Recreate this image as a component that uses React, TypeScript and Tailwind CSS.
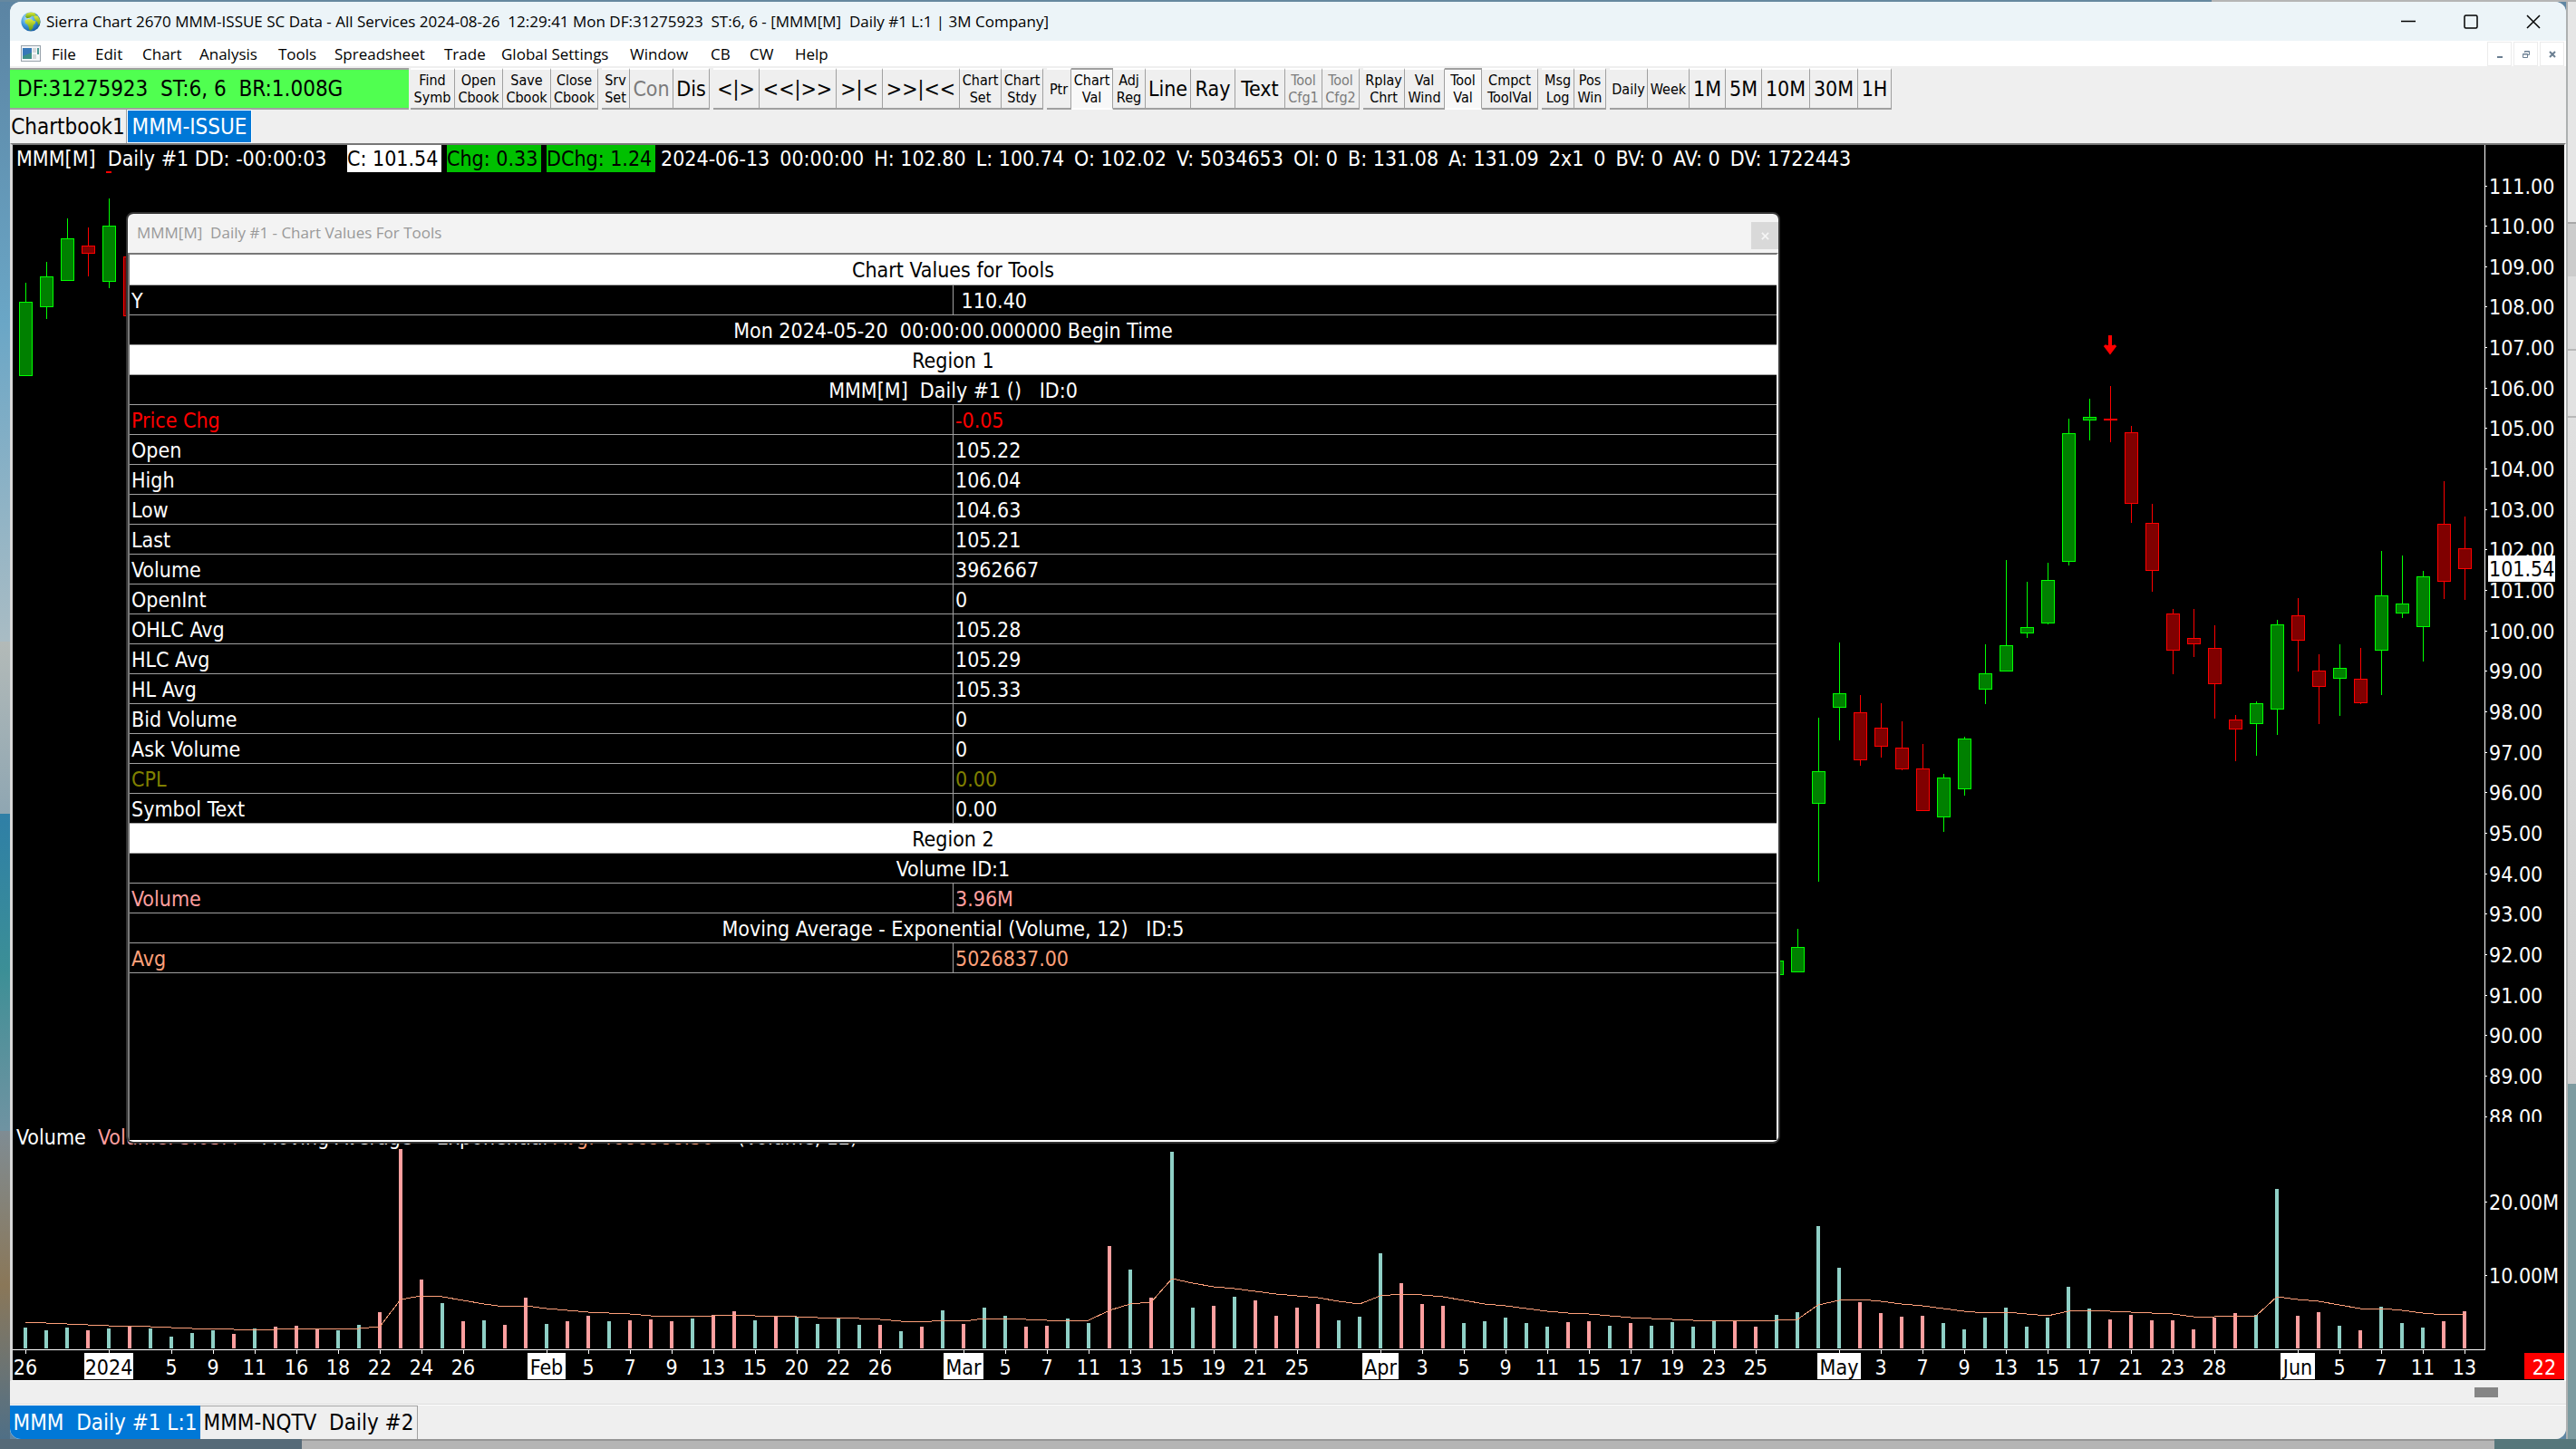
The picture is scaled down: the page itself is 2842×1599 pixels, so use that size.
import { useState } from "react";

type Candle = [number, "u" | "d", number, number, number, number];

// slot, direction, high, body top, body bottom, low
const CANDLES: Candle[] = [
  [0, "u", 152, 173, 255, 255],
  [1, "u", 129, 145, 179, 192],
  [2, "u", 81, 103, 150, 150],
  [3, "d", 91, 111, 120, 145],
  [4, "u", 59, 89, 151, 158],
  [5, "d", 123, 123, 189, 189],
  [84, "u", 900, 900, 916, 916],
  [85, "u", 865, 885, 913, 913],
  [86, "u", 632, 691, 727, 813],
  [87, "u", 549, 605, 621, 657],
  [88, "d", 607, 626, 679, 685],
  [89, "d", 616, 643, 664, 676],
  [90, "d", 636, 665, 689, 690],
  [91, "d", 661, 688, 735, 735],
  [92, "u", 694, 698, 742, 758],
  [93, "u", 653, 655, 711, 718],
  [94, "u", 551, 583, 601, 617],
  [95, "u", 458, 552, 581, 581],
  [96, "u", 482, 532, 539, 544],
  [97, "u", 461, 480, 528, 529],
  [98, "u", 302, 318, 460, 464],
  [99, "u", 280, 300, 304, 326],
  [100, "d", 266, 302, 304, 328],
  [101, "d", 310, 317, 396, 417],
  [102, "d", 396, 417, 470, 493],
  [103, "d", 512, 517, 558, 584],
  [104, "d", 512, 544, 551, 565],
  [105, "d", 530, 555, 595, 633],
  [106, "d", 629, 634, 645, 680],
  [107, "u", 614, 616, 639, 674],
  [108, "u", 524, 529, 623, 651],
  [109, "d", 500, 519, 547, 581],
  [110, "d", 562, 580, 598, 639],
  [111, "u", 551, 577, 589, 630],
  [112, "d", 555, 589, 616, 617],
  [113, "u", 448, 497, 558, 607],
  [114, "u", 453, 506, 517, 522],
  [115, "u", 470, 476, 532, 570],
  [116, "d", 371, 418, 482, 501],
  [117, "d", 410, 445, 468, 502],
];

// u = up day, d = down day, then the bar height in thirds of a pixel
const VOLUME =
  "u69 u60 u69 d60 u66 d72 u66 u39 u51 u60 d48 u66 d72 d75 d66 u60 u78 d120 d660 d228 u150 d90 u93 d78 d168 u81 d90 d108 u90 d93 d96 d90 u99 d111 d123 u93 d108 u105 u81 u99 u78 d78 u57 d72 u126 d81 u135 u108 d72 d75 u99 u84 d339 u261 d168 u651 u135 d141 u171 d159 d108 d135 d147 u93 u105 u315 d216 d147 d141 u84 u90 u102 u84 u72 d87 d90 u75 d84 u75 u87 u72 u90 d90 d72 u111 u120 u405 u267 d153 d117 d105 d108 u84 u63 u102 u135 u72 u102 u204 u132 d96 d111 d93 d93 d63 d102 d117 u111 u528 d108 d120 u75 d60 u138 u84 u69 d90 d123".split(
    " "
  );

const AVERAGE = [
  86, 83, 80, 77, 74, 74, 73, 68, 65, 65, 62, 62, 62, 65, 65, 65, 65, 72, 162,
  173, 170, 159, 147, 137, 140, 131, 125, 121, 116, 113, 109, 107, 107, 107,
  110, 107, 107, 106, 101, 101, 98, 95, 89, 86, 92, 89, 98, 98, 95, 92, 92, 92,
  126, 148, 153, 230, 215, 203, 197, 190, 179, 173, 167, 155, 148, 173, 179,
  176, 170, 159, 147, 140, 131, 122, 116, 113, 107, 101, 98, 95, 92, 92, 92, 89,
  92, 95, 143, 160, 161, 155, 146, 140, 131, 122, 116, 119, 113, 109, 124, 125,
  122, 119, 116, 113, 104, 104, 107, 107, 170, 161, 155, 144, 131, 131, 125,
  116, 110, 113,
];

const DATES: [number, string][] = [
  [0, "26"], [7, "5"], [9, "9"], [11, "11"], [13, "16"], [15, "18"],
  [17, "22"], [19, "24"], [21, "26"], [27, "5"], [29, "7"], [31, "9"],
  [33, "13"], [35, "15"], [37, "20"], [39, "22"], [41, "26"], [47, "5"],
  [49, "7"], [51, "11"], [53, "13"], [55, "15"], [57, "19"], [59, "21"],
  [61, "25"], [67, "3"], [69, "5"], [71, "9"], [73, "11"], [75, "15"],
  [77, "17"], [79, "19"], [81, "23"], [83, "25"], [89, "3"], [91, "7"],
  [93, "9"], [95, "13"], [97, "15"], [99, "17"], [101, "21"], [103, "23"],
  [105, "28"], [111, "5"], [113, "7"], [115, "11"], [117, "13"],
];

const MONTHS: [number, string, number][] = [
  [4, "2024", 54], [25, "Feb", 42], [45, "Mar", 44],
  [65, "Apr", 40], [87, "May", 48], [109, "Jun", 38],
];

const ZERO = 1328;
const slotX = (slot: number) => 14 + slot * 23;

const MENUS = [
  ["File", "w-[48px]"],
  ["Edit", "w-[52px]"],
  ["Chart", "w-[63px]"],
  ["Analysis", "w-[87px]"],
  ["Tools", "w-[62px]"],
  ["Spreadsheet", "w-[121px]"],
  ["Trade", "w-[63px]"],
  ["Global Settings", "w-[142px]"],
  ["Window", "w-[89px]"],
  ["CB", "w-[43px]"],
  ["CW", "w-[50px]"],
  ["Help", "w-[48px]"],
];

type Tool = { lines: string[]; w: string; big?: boolean; off?: boolean; on?: boolean };

const TOOLS: Tool[][] = [
  [
    { lines: ["Find", "Symb"], w: "w-[49px]" },
    { lines: ["Open", "Cbook"], w: "w-[53px]" },
    { lines: ["Save", "Cbook"], w: "w-[53px]" },
    { lines: ["Close", "Cbook"], w: "w-[52px]" },
  ],
  [
    { lines: ["Srv", "Set"], w: "w-[31px]" },
    { lines: ["Con"], w: "w-[48px]", big: true, off: true },
    { lines: ["Dis"], w: "w-[40px]", big: true },
  ],
  [
    { lines: ["<|>"], w: "w-[51px]", big: true },
    { lines: ["<<|>>"], w: "w-[85px]", big: true },
    { lines: [">|<"], w: "w-[51px]", big: true },
    { lines: [">>|<<"], w: "w-[85px]", big: true },
    { lines: ["Chart", "Set"], w: "w-[46px]" },
    { lines: ["Chart", "Stdy"], w: "w-[46px]" },
  ],
  [
    { lines: ["Ptr"], w: "w-[27px]" },
    { lines: ["Chart", "Val"], w: "w-[46px]", on: true },
    { lines: ["Adj", "Reg"], w: "w-[36px]" },
    { lines: ["Line"], w: "w-[50px]", big: true },
    { lines: ["Ray"], w: "w-[49px]", big: true },
    { lines: ["Text"], w: "w-[55px]", big: true },
    { lines: ["Tool", "Cfg1"], w: "w-[41px]", off: true },
    { lines: ["Tool", "Cfg2"], w: "w-[41px]", off: true },
  ],
  [
    { lines: ["Rplay", "Chrt"], w: "w-[46px]" },
    { lines: ["Val", "Wind"], w: "w-[44px]" },
    { lines: ["Tool", "Val"], w: "w-[41px]", on: true },
    { lines: ["Cmpct", "ToolVal"], w: "w-[62px]" },
  ],
  [
    { lines: ["Msg", "Log"], w: "w-[36px]" },
    { lines: ["Pos", "Win"], w: "w-[35px]" },
  ],
  [
    { lines: ["Daily"], w: "w-[42px]" },
    { lines: ["Week"], w: "w-[46px]" },
    { lines: ["1M"], w: "w-[40px]", big: true },
    { lines: ["5M"], w: "w-[40px]", big: true },
    { lines: ["10M"], w: "w-[53px]", big: true },
    { lines: ["30M"], w: "w-[53px]", big: true },
    { lines: ["1H"], w: "w-[37px]", big: true },
  ],
];

type Row = { head?: string; title?: string; cells?: [string, string]; color?: string };

const ROWS: Row[] = [
  { head: "Chart Values for Tools" },
  { cells: ["Y", " 110.40"] },
  { title: "Mon 2024-05-20  00:00:00.000000 Begin Time" },
  { head: "Region 1" },
  { title: "MMM[M]  Daily #1 ()   ID:0" },
  { cells: ["Price Chg", "-0.05"], color: "text-[#ff0000]" },
  { cells: ["Open", "105.22"] },
  { cells: ["High", "106.04"] },
  { cells: ["Low", "104.63"] },
  { cells: ["Last", "105.21"] },
  { cells: ["Volume", "3962667"] },
  { cells: ["OpenInt", "0"] },
  { cells: ["OHLC Avg", "105.28"] },
  { cells: ["HLC Avg", "105.29"] },
  { cells: ["HL Avg", "105.33"] },
  { cells: ["Bid Volume", "0"] },
  { cells: ["Ask Volume", "0"] },
  { cells: ["CPL", "0.00"], color: "text-[#808000]" },
  { cells: ["Symbol Text", "0.00"] },
  { head: "Region 2" },
  { title: "Volume ID:1" },
  { cells: ["Volume", "3.96M"], color: "text-[#ff9f9f]" },
  { title: "Moving Average - Exponential (Volume, 12)   ID:5" },
  { cells: ["Avg", "5026837.00"], color: "text-[#ffa07a]" },
];

const QUOTE = [
  "2024-06-13",
  "00:00:00",
  "H: 102.80",
  "L: 100.74",
  "O: 102.02",
  "V: 5034653",
  "OI: 0",
  "B: 131.08",
  "A: 131.09",
  "2x1",
  "0",
  "BV: 0",
  "AV: 0",
  "DV: 1722443",
];

function Globe() {
  return (
    <svg viewBox="0 0 22 22" className="w-[22px] h-[22px]">
      <defs>
        <radialGradient id="sea" cx="0.35" cy="0.3" r="0.8">
          <stop offset="0" stopColor="#bfe6fb" />
          <stop offset="0.5" stopColor="#3f9bdc" />
          <stop offset="1" stopColor="#0f4f93" />
        </radialGradient>
        <linearGradient id="land" x1="0" y1="0" x2="0" y2="1">
          <stop offset="0" stopColor="#e2ec3a" />
          <stop offset="1" stopColor="#5f9a12" />
        </linearGradient>
      </defs>
      <circle cx="11" cy="11" r="10.6" fill="url(#sea)" />
      <path d="M6 2.2C9 .6 13 .2 15.5 1.6L17 4l-2.500 1.200L12.500 4.500 10 6.500 6.800 7.200 5 5.500Z" fill="url(#land)" />
      <path d="M4.500 9.500 8 8l3.500.3 2.300 1.700 2.700.3-.8 2.800-2 1.700-.4 3.200-2.300 2.600-1.800-.6-.6-3.500-1.400-2.600L4.800 12.600Z" fill="url(#land)" />
      <path d="M14 4.800 18.300 4.200 20.800 8l.6 4-1.900 3.200-1.200-3.700L15.500 8.700Z" fill="url(#land)" />
    </svg>
  );
}

function DocIcon() {
  return (
    <svg viewBox="0 0 22 18" className="w-[22px] h-[18px]">
      <rect x="0.5" y="0.5" width="21" height="17" fill="#f4f6f8" stroke="#98a2ab" />
      <rect x="2" y="3" width="10" height="12" fill="#3d8f86" />
      <path d="M2 3h10v5L2 12Z" fill="#3878b8" />
      <rect x="13" y="3" width="4" height="5" fill="#d5d8db" />
      <rect x="13" y="10" width="4" height="5" fill="#d5d8db" />
      <rect x="18" y="3" width="2" height="7" fill="#4a9a94" />
    </svg>
  );
}

function TitleBar() {
  return (
    <header className="h-[43px] flex items-center bg-[#ecf4f8] pl-3 pr-[2px] font-['Open_Sans',sans-serif] text-[17px] text-black">
      <Globe />
      <h1 className="flex-1 pl-[6px] whitespace-pre">
        {"Sierra Chart 2670 MMM-ISSUE SC Data - All Services 2024-08-26  12:29:41 Mon DF:31275923  ST:6, 6 - [MMM[M]  Daily #1 L:1 | 3M Company]"}
      </h1>
      <button aria-label="Minimize" className="w-[69px] h-full flex items-center justify-center">
        <svg viewBox="0 0 16 16" className="w-4 h-4" fill="none" stroke="#000">
          <path d="M0 7.500h16" strokeWidth="1.500" />
        </svg>
      </button>
      <button aria-label="Maximize" className="w-[69px] h-full flex items-center justify-center">
        <svg viewBox="0 0 16 16" className="w-4 h-4" fill="none" stroke="#000">
          <rect x="1" y="1" width="14" height="14" rx="1.500" strokeWidth="1.500" />
        </svg>
      </button>
      <button aria-label="Close" className="w-[69px] h-full flex items-center justify-center">
        <svg viewBox="0 0 16 16" className="w-4 h-4" fill="none" stroke="#000">
          <path d="M1 1l14 14M15 1 1 15" strokeWidth="1.500" />
        </svg>
      </button>
    </header>
  );
}

function MenuBar() {
  return (
    <nav className="h-7 flex items-center bg-white pl-3 font-['Open_Sans',sans-serif] text-[17px] text-black">
      <DocIcon />
      <div className="flex-1 flex pl-3 pt-[2px]">
        {MENUS.map(([label, width]) => (
          <button key={label} className={`${width} text-left whitespace-nowrap`}>
            {label}
          </button>
        ))}
      </div>
      <div className="flex gap-[2px] pr-[2px] pt-[1px]">
        <button aria-label="Minimize chart" className="w-[27px] h-[27px] border border-[#ececec] flex items-center justify-center">
          <svg viewBox="0 0 10 10" className="w-[10px] h-[10px]">
            <path d="M2 8h6" stroke="#6b7f92" strokeWidth="2" />
          </svg>
        </button>
        <button aria-label="Restore chart" className="w-[27px] h-[27px] border border-[#ececec] flex items-center justify-center">
          <svg viewBox="0 0 10 10" className="w-[10px] h-[10px]" fill="none" stroke="#6b7f92">
            <path d="M3.500 3V1.500h5v4H7M3.500 2h5" />
            <path d="M1.500 4.500h5v4h-5ZM1.500 5h5" />
          </svg>
        </button>
        <button aria-label="Close chart" className="w-[27px] h-[27px] border border-[#ececec] flex items-center justify-center">
          <svg viewBox="0 0 10 10" className="w-[10px] h-[10px]">
            <path d="M2 2l6 6M8 2 2 8" stroke="#6b7f92" strokeWidth="2" />
          </svg>
        </button>
      </div>
    </nav>
  );
}

function ToolButton({ tool }: { tool: Tool }) {
  const size = tool.big ? "text-[23px] leading-[28px]" : "text-[16px] leading-[19px]";
  const color = tool.off ? "text-[#7b7b7b]" : "text-black";
  const face = tool.on
    ? "bg-[#f8f8f8] border-t-[#a0a0a0] border-b-white"
    : "bg-[#efefef] border-t-white border-b-[#a0a0a0]";
  return (
    <button
      disabled={tool.off}
      className={`${tool.w} ${size} ${color} ${face} h-[46px] shrink-0 border-y-2 border-r border-r-[#a0a0a0] flex flex-col items-center justify-center whitespace-nowrap`}
    >
      {tool.lines.map((line) => (
        <span key={line}>{line}</span>
      ))}
    </button>
  );
}

function Toolbar() {
  return (
    <div className="h-12 flex items-end gap-1 bg-[#efefef]">
      <div className="-mr-[2px] w-[440px] h-[46px] shrink-0 border-y-2 border-y-[#a0a0a0] bg-[#50ff50] pl-2 text-[24px] leading-[42px] text-black whitespace-pre">
        {"DF:31275923  ST:6, 6  BR:1.008G"}
      </div>
      {TOOLS.map((group, i) => (
        <div key={i} className="flex">
          {group.map((tool) => (
            <ToolButton key={tool.lines.join(" ")} tool={tool} />
          ))}
        </div>
      ))}
    </div>
  );
}

function Plot() {
  const points = AVERAGE.map((v, i) => `${slotX(i)},${Math.round(ZERO - v / 3)}`).join(" ");
  return (
    <svg className="w-full h-full" fontSize="23">
      <g shapeRendering="crispEdges">
        {CANDLES.map(([slot, dir, high, top, bottom, low]) => {
          const stroke = dir === "u" ? "#00ff00" : "#ff0000";
          return (
            <g key={slot}>
              <rect x={slotX(slot)} y={high} width="1" height={low - high} fill={stroke} />
              <rect
                x={slotX(slot) - 6.5}
                y={top + 0.5}
                width="14"
                height={Math.max(bottom - top - 1, 1)}
                fill={dir === "u" ? "#008000" : "#800000"}
                stroke={stroke}
              />
            </g>
          );
        })}
        {VOLUME.map((bar, i) => {
          const h = Math.round(Number(bar.slice(1)) / 3);
          return (
            <rect
              key={i}
              x={slotX(i) - 2}
              y={ZERO - h}
              width="4"
              height={h}
              fill={bar[0] === "u" ? "#8fd0c6" : "#ff9f9f"}
            />
          );
        })}
        <polyline points={points} fill="none" stroke="#ffa07a" />
        <rect x="103" y="29" width="6" height="2" fill="#ff0000" />
        <rect x="0" y="1329" width="100%" height="1" fill="#fff" />
        {[...DATES, ...MONTHS].map(([slot]) => (
          <rect key={slot} x={slotX(slot)} y="1330" width="1" height="4" fill="#fff" />
        ))}
        {MONTHS.map(([slot, label, width]) => (
          <rect key={label} x={slotX(slot) - width / 2} y="1333" width={width} height="29" fill="#fff" />
        ))}
      </g>
      <path d="M2314 210v15" stroke="#ff0000" strokeWidth="4" />
      <path d="M2308 221l6 8 6-8" fill="#ff0000" stroke="#ff0000" strokeWidth="3" />
      {DATES.map(([slot, label]) => (
        <text key={slot} x={slotX(slot)} y="1357" textAnchor="middle" fill="#fff">
          {label}
        </text>
      ))}
      {MONTHS.map(([slot, label]) => (
        <text key={slot} x={slotX(slot)} y="1357" textAnchor="middle" fill="#000">
          {label}
        </text>
      ))}
    </svg>
  );
}

function Scale() {
  const prices = Array.from({ length: 24 }, (_, i) => 111 - i);
  return (
    <svg className="w-[88px] h-full shrink-0" fontSize="23" fill="#fff">
      <clipPath id="prices">
        <rect x="0" y="0" width="88" height="1078" />
      </clipPath>
      <rect x="0" y="0" width="1" height="1330" />
      <g clipPath="url(#prices)">
        {prices.map((price, i) => {
          const y = Math.round(44.5 + i * 44.66);
          return (
            <g key={price}>
              <rect x="0" y={y} width="3" height="1" />
              <text x="5" y={y + 9}>
                {price.toFixed(2)}
              </text>
            </g>
          );
        })}
      </g>
      <rect x="4" y="453" width="74" height="29" />
      <text x="5" y="476" fill="#000">
        101.54
      </text>
      <rect x="0" y="1166" width="3" height="1" />
      <text x="5" y="1175">
        20.00M
      </text>
      <rect x="0" y="1247" width="3" height="1" />
      <text x="5" y="1256">
        10.00M
      </text>
      <rect x="44" y="1333" width="44" height="29" fill="#ff0000" />
      <text x="66" y="1357" textAnchor="middle">
        22
      </text>
    </svg>
  );
}

function ValuesDialog({ onClose }: { onClose: () => void }) {
  return (
    <section
      aria-label="Chart Values For Tools"
      className="absolute left-[125px] top-[74px] w-[1825px] h-[1028px] flex flex-col rounded-lg border-2 border-[#333] bg-black overflow-hidden"
    >
      <div className="h-[43px] shrink-0 flex items-start justify-between bg-[#f3f3f3] pl-[10px] font-['Open_Sans',sans-serif] text-[17px] text-[#999]">
        <h2 className="leading-[42px] whitespace-pre">
          {"MMM[M]  Daily #1 - Chart Values For Tools"}
        </h2>
        <button
          aria-label="Close"
          onClick={onClose}
          className="mt-[9px] w-[30px] h-[30px] bg-[#d9d9d9] flex items-center justify-center"
        >
          <svg viewBox="0 0 10 10" className="w-[9px] h-[9px]">
            <path d="M1 1l8 8M9 1 1 9" stroke="#f5f5f5" strokeWidth="2" />
          </svg>
        </button>
      </div>
      <div className="flex-1 border-2 border-t-[#777] border-l-[#777] border-r-white border-b-white">
        <table className="w-full table-fixed border-collapse text-[23px] leading-[30px] whitespace-pre">
          <tbody>
            {ROWS.map((row, i) =>
              row.cells ? (
                <tr key={i} className={`h-[33px] border-b border-[#a0a0a0] ${row.color ?? "text-white"}`}>
                  <th scope="row" className="w-1/2 p-0 pt-[2px] pl-[2px] text-left font-normal border-r border-[#a0a0a0]">
                    {row.cells[0]}
                  </th>
                  <td className="p-0 pt-[2px] pl-[2px]">{row.cells[1]}</td>
                </tr>
              ) : (
                <tr
                  key={i}
                  className={`h-[33px] border-b border-[#a0a0a0] ${row.head ? "bg-white text-black" : "text-white"}`}
                >
                  <th colSpan={2} className="p-0 pt-[2px] text-center font-normal">
                    {row.head ?? row.title}
                  </th>
                </tr>
              )
            )}
          </tbody>
        </table>
      </div>
    </section>
  );
}

export default function App() {
  const [showValues, setShowValues] = useState(true);

  return (
    <div className="min-h-screen flex flex-col bg-[#5f86a3] font-['DejaVu_Sans_Condensed','DejaVu_Sans',sans-serif]">
      <div className="h-[2px] flex">
        <div className="flex-1 bg-[#66889f]" />
        <div className="w-[402px] bg-[#b5b5b5]" />
      </div>

      <div className="flex-1 flex">
        {/* Desktop, left side */}
        <div className="w-[11px] shrink-0 flex flex-col">
          <div className="flex-1 bg-linear-to-b from-[#5b84a3] via-[#6aa6c6] to-[#a9bcc4]" />
          <div className="h-[190px] bg-linear-to-b from-[#b3bab8] to-[#8fa6b2]" />
          <div className="h-[350px] bg-linear-to-b from-[#2f7fa6] via-[#3c8f96] to-[#6f93a2]" />
          <div className="h-[340px] bg-linear-to-b from-[#7f8c93] via-[#8a7758] to-[#4f6f86]" />
        </div>

        {/* Main window */}
        <main className="flex-1 min-w-0 flex flex-col rounded-xl bg-[#efefef] overflow-hidden">
          <TitleBar />
          <MenuBar />
          <Toolbar />

          <div className="h-[37px] flex bg-[#efefef] text-[24px] leading-[36px] text-black">
            <button className="w-[129px] border-r border-[#a0a0a0] whitespace-nowrap">Chartbook1</button>
            <button className="w-[138px] border border-white bg-[#0078d7] text-white whitespace-nowrap">
              MMM-ISSUE
            </button>
          </div>

          {/* Chart */}
          <div className="relative flex-1 flex bg-black border-t-2 border-[#777] border-b border-b-white border-l-[3px] border-l-[#d8d8d8] border-r-2 border-r-white">
            <div className="relative flex-1 min-w-0 min-h-[1363px]">
              <Plot />
              <div className="absolute left-1 top-0 flex text-[23px] leading-[30px] text-white whitespace-pre">
                <p className="w-[365px]">{"MMM[M]  Daily #1 DD: -00:00:03"}</p>
                <p className="w-[104px] bg-white text-black">C: 101.54</p>
                <p className="ml-[6px] w-[104px] bg-[#00c000] text-black">Chg: 0.33</p>
                <p className="ml-[6px] w-[120px] bg-[#00c000] text-black">DChg: 1.24</p>
                <div className="flex gap-[11px] pl-[6px]">
                  {QUOTE.map((item) => (
                    <span key={item}>{item}</span>
                  ))}
                </div>
              </div>
              <p className="absolute left-1 top-[1080px] text-[23px] leading-[30px] text-white whitespace-pre">
                {"Volume  "}
                <span className="text-[#ff9f9f]">Volume: 5.03M</span>
                {"    Moving Average  - Exponential "}
                <span className="text-[#ffa07a]">Avg: 4686988.50</span>
                {"    (Volume, 12)"}
              </p>
            </div>
            <Scale />
            {showValues && <ValuesDialog onClose={() => setShowValues(false)} />}
          </div>

          <div className="h-[26px] flex items-center justify-end border-b border-[#dcdcdc] bg-[#efefef] pr-[75px]">
            <div className="w-[26px] h-[11px] bg-[#858585]" />
          </div>

          <div className="h-[38px] flex bg-[#efefef] border-t border-white text-[24px] leading-[36px] text-black whitespace-pre">
            <button className="w-[210px] bg-[#0078d7] text-white">{"MMM  Daily #1 L:1"}</button>
            <button className="w-[240px] border-r border-t border-[#a0a0a0]">{"MMM-NQTV  Daily #2"}</button>
          </div>
        </main>

        {/* Desktop, right side */}
        <div className="w-[11px] shrink-0 flex flex-col border-l-2 border-[#adb0b0] bg-[#7d9ba0]">
          <div className="h-[245px] border-b-2 border-[#a8a8a8] bg-[#e6e6e6]" />
          <div className="h-[58px] bg-[#cccccc]" />
          <div className="h-[82px] border-b-2 border-[#b8b8b8] bg-[#dcdcdc]" />
          <div className="h-[74px] border-b-2 border-[#b8b8b8] bg-[#e2e2e2]" />
          <div className="h-[735px] bg-linear-to-b from-[#e0e0e0] to-[#cfcfcf]" />
        </div>
      </div>

      <div className="h-[11px] flex">
        <div className="w-[333px] bg-[#566a78]" />
        <div className="flex-1 border-t-2 border-[#959595] bg-[#b5b5b5]" />
        <div className="w-[90px] bg-[#56777b]" />
      </div>
    </div>
  );
}
